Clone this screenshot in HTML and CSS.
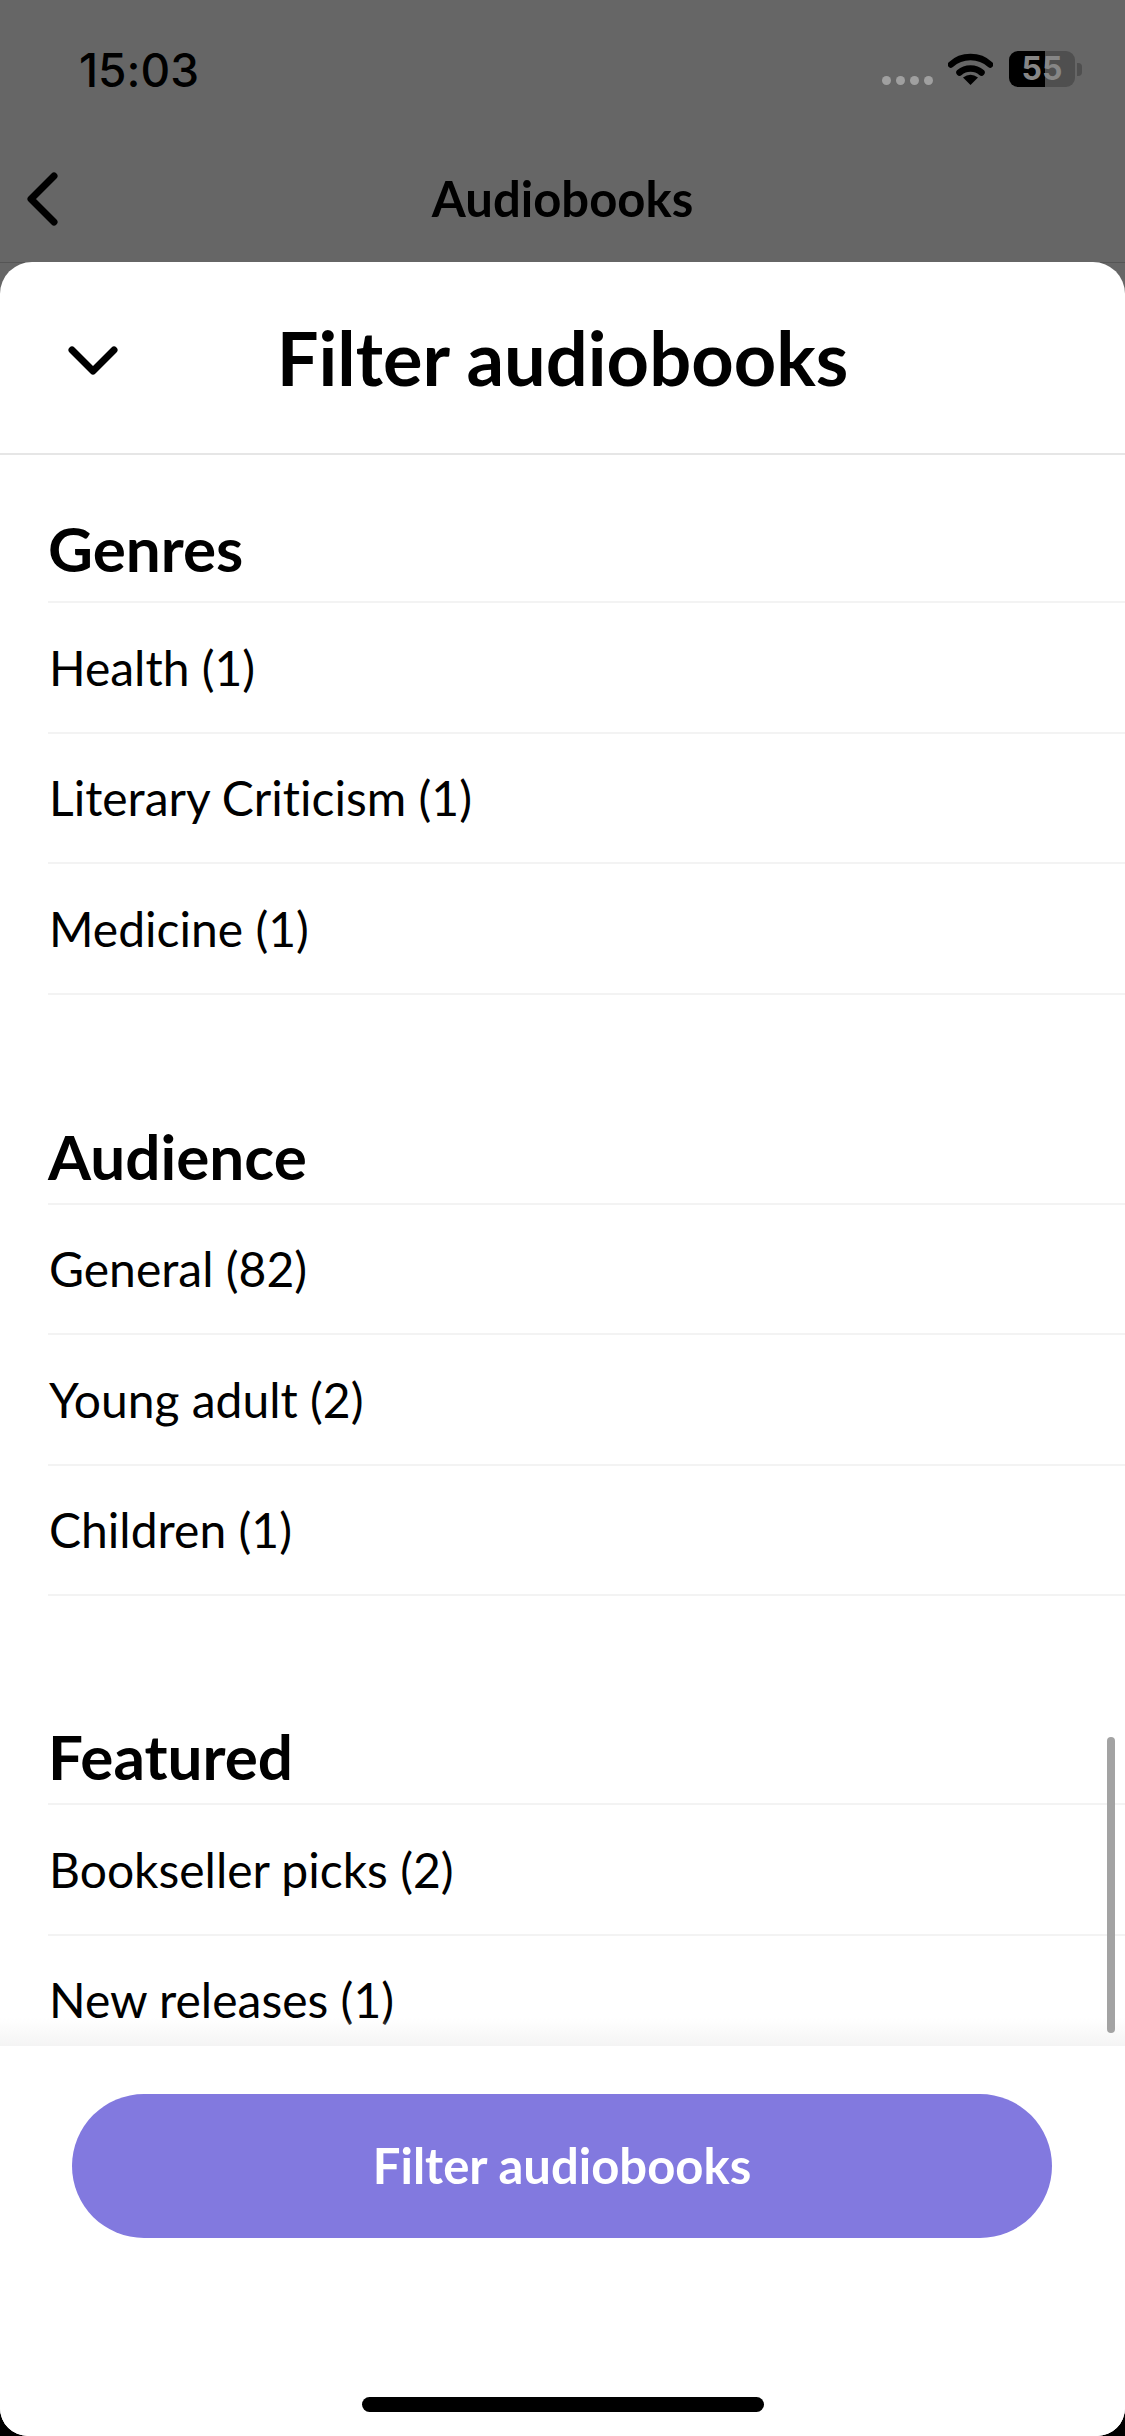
FILE: index.html
```html
<!DOCTYPE html>
<html lang="en">
<head>
<meta charset="utf-8">
<title>Filter audiobooks</title>
<link rel="stylesheet" href="styles.css">
</head>
<body>
<div class="screen">
  <div class="backdrop">
    <div class="status">
      <span class="time">15:03</span>
      <div class="status-icons">
        <div class="signal"><i></i><i></i><i></i><i></i></div>
        <svg class="wifi" viewBox="0 0 45 33" width="45" height="33"><path d="M3 12.5C13.5 2.5 31.500 2.500 42 12.500" fill="none" stroke="#000" stroke-width="6.500" stroke-linecap="round"/><path d="M11.500 20.500C17.500 15 27.500 15 33.500 20.500" fill="none" stroke="#000" stroke-width="6.500" stroke-linecap="round"/><path d="M22.500 33L15 25.500Q22.500 20 30 25.500Z" fill="#000"/></svg>
        <div class="battery"><div class="battery-body"><span class="battery-level">55</span></div><span class="battery-nub"></span></div>
      </div>
    </div>
    <div class="nav">
      <svg class="nav-back" viewBox="0 0 34 56" width="34" height="56"><path d="M27 4L4 27L27 50" fill="none" stroke="#000" stroke-width="7" stroke-linecap="round" stroke-linejoin="round"/></svg>
      <span class="nav-title">Audiobooks</span>
    </div>
  </div>
  <div class="sheet">
    <header class="sheet-head">
      <svg class="sheet-close" viewBox="0 0 50 30" width="50" height="30"><path d="M4 4L25 25L46 4" fill="none" stroke="#000" stroke-width="7" stroke-linecap="round" stroke-linejoin="round"/></svg>
      <h1 class="sheet-title">Filter audiobooks</h1>
    </header>
    <div class="filters">
      <section class="group group-first">
        <h2 class="group-title">Genres</h2>
        <div class="row">Health (1)</div>
        <div class="row">Literary Criticism (1)</div>
        <div class="row">Medicine (1)</div>
      </section>
      <section class="group">
        <h2 class="group-title">Audience</h2>
        <div class="row">General (82)</div>
        <div class="row">Young adult (2)</div>
        <div class="row">Children (1)</div>
      </section>
      <section class="group group-last">
        <h2 class="group-title">Featured</h2>
        <div class="row">Bookseller picks (2)</div>
        <div class="row">New releases (1)</div>
      </section>
      <div class="fade"></div>
      <div class="scrollbar"></div>
    </div>
    <footer class="sheet-foot">
      <button class="apply">Filter audiobooks</button>
      <div class="home-bar"></div>
    </footer>
  </div>
</div>
</body>
</html>
```

FILE: styles.css
```css
* { box-sizing: border-box; }
html, body { margin: 0; padding: 0; }
body {
  width: 1125px;
  height: 2436px;
  background: #000;
  font-family: "Lato", "Open Sans", sans-serif;
  font-variant-ligatures: none;
  color: #000;
  overflow: hidden;
}
.screen {
  width: 1125px;
  height: 2436px;
  display: flex;
  flex-direction: column;
  background: #666;
  border-radius: 0 0 28px 28px;
  overflow: hidden;
}
.backdrop { height: 263px; flex: none; }
.status {
  height: 138px;
  padding: 47px 43px 0 79px;
  display: flex;
  justify-content: space-between;
  align-items: flex-start;
}
.time {
  font-family: "Inter", "Roboto", sans-serif;
  font-size: 46px;
  font-weight: 500;
  line-height: 46px;
  letter-spacing: 0;
}
.status-icons { display: flex; align-items: flex-start; margin-top: 4px; }
.signal { display: flex; gap: 5px; margin: 25px 15px 0 0; }
.signal i { width: 9px; height: 9px; border-radius: 50%; background: #a0a0a0; }
.wifi { margin: 1px 16px 0 0; }
.battery { display: flex; align-items: center; }
.battery-body {
  width: 66px;
  height: 36px;
  border-radius: 9px;
  background: linear-gradient(to right, #000 36px, #4f4f4f 36px);
  text-align: center;
}
.battery-level {
  font-family: "Inter", "Roboto", sans-serif;
  font-size: 32px;
  font-weight: 700;
  line-height: 36px;
  color: #868686;
}
.battery-nub { width: 5px; height: 13px; margin-left: 2px; border-radius: 0 4px 4px 0; background: #4f4f4f; }
.nav {
  height: 125px;
  padding-left: 27px;
  display: flex;
  align-items: flex-start;
  position: relative;
  border-bottom: 1px solid #555;
}
.nav-back { margin-top: 34px; }
.nav-title {
  position: absolute;
  left: 0;
  right: 0;
  top: 35px;
  text-align: center;
  font-size: 49px;
  font-weight: 700;
  line-height: 50px;
}
.sheet {
  flex: 1;
  min-height: 0;
  margin-top: -1px;
  display: flex;
  flex-direction: column;
  background: #fff;
  border-radius: 32px 32px 0 0;
  position: relative;
}
.sheet-head {
  height: 193px;
  flex: none;
  display: flex;
  align-items: center;
  justify-content: center;
  position: relative;
  border-bottom: 2px solid #e6e6e6;
}
.sheet-close { position: absolute; left: 68px; top: 84px; }
.sheet-title { margin: 0; font-size: 74px; font-weight: 700; line-height: 80px; }
.filters { flex: 1; min-height: 0; position: relative; overflow: hidden; }
.group { margin-top: 116px; }
.group-first { margin-top: 48px; }
.group-last { margin-top: 115px; }
.group-title {
  margin: 0 0 0 48px;
  height: 94px;
  font-size: 62px;
  font-weight: 700;
  line-height: 90px;
  border-bottom: 2px solid #f3f3f3;
}
.group-first .group-title { height: 100px; line-height: 90px; }
.row {
  margin-left: 48px;
  padding: 0 0 0 1px;
  height: 130.500px;
  display: flex;
  align-items: center;
  font-size: 48px;
  border-bottom: 2px solid #f3f3f3;
}
.fade {
  position: absolute;
  left: 0;
  right: 0;
  bottom: 0;
  height: 28px;
  background: linear-gradient(to bottom, rgba(244, 244, 244, 0), #f4f4f4);
}
.scrollbar {
  position: absolute;
  right: 10px;
  bottom: 13px;
  width: 8px;
  height: 296px;
  border-radius: 4px;
  background: #a3a3a3;
}
.sheet-foot {
  height: 390px;
  flex: none;
  padding: 48px 73px 0 72px;
  background: #fff;
  position: relative;
}
.apply {
  width: 100%;
  height: 144px;
  border: none;
  border-radius: 72px;
  padding: 0 0 3px;
  background: #8279df;
  color: #fff;
  font-family: inherit;
  font-size: 49px;
  font-weight: 700;
}
.home-bar {
  position: absolute;
  left: 362px;
  bottom: 24px;
  width: 402px;
  height: 15px;
  border-radius: 8px;
  background: #000;
}
```
